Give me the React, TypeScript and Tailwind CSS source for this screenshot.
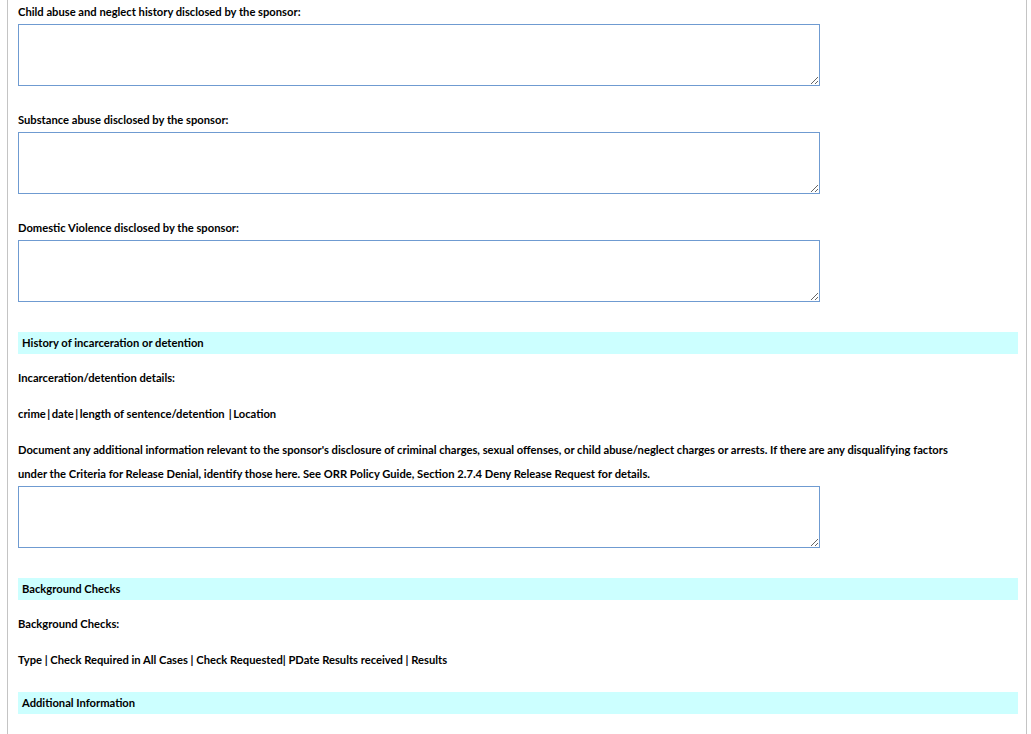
const fontStack = { fontFamily: 'Lato, "Open Sans", sans-serif' };

function Field({ label }: { label: string }) {
  return (
    <div className="mb-[22px]">
      <Line>{label}</Line>
      <textarea className="block w-[802px] h-[62px] border border-[#6f9bd1] bg-white outline-none" />
    </div>
  );
}

function SectionBar({ title }: { title: string }) {
  return <div className="w-[1000px] h-[22px] leading-[22px] bg-[#ccffff] pl-1 whitespace-nowrap">{title}</div>;
}

function Line({ children }: { children: React.ReactNode }) {
  return <div className="h-6 leading-6 whitespace-nowrap">{children}</div>;
}

// pipes in the original font carry more side bearing
function Pipe() {
  return <span className="px-[1.5px]">|</span>;
}

export default function App() {
  return (
    <div className="h-[734px] overflow-hidden bg-white">
      <div
        className="ml-[7px] w-[1020px] min-h-[734px] border-l border-r border-[#c4c4c4] pl-[10px] pr-2 text-[11.2px] font-bold text-black"
        style={fontStack}
      >
        <Field label="Child abuse and neglect history disclosed by the sponsor:" />
        <Field label="Substance abuse disclosed by the sponsor:" />
        <div>
          <Line>Domestic Violence disclosed by the sponsor:</Line>
          <textarea className="block w-[802px] h-[62px] border border-[#6f9bd1] bg-white outline-none" />
        </div>

        <div className="mt-[30px]">
          <SectionBar title="History of incarceration or detention" />
        </div>
        <div className="mt-3 flex flex-col gap-3">
          <Line>Incarceration/detention details:</Line>
          <Line>
            crime<Pipe />date<Pipe />length of sentence/detention <Pipe />Location
          </Line>
          <div>
            <Line>
              Document any additional information relevant to the sponsor's disclosure of criminal charges, sexual
              offenses, or child abuse/neglect charges or arrests. If there are any disqualifying factors
            </Line>
            <Line>
              under the Criteria for Release Denial, identify those here. See ORR Policy Guide, Section 2.7.4 Deny
              Release Request for details.
            </Line>
          </div>
        </div>
        <textarea className="block w-[802px] h-[62px] border border-[#6f9bd1] bg-white outline-none" />

        <div className="mt-[30px]">
          <SectionBar title="Background Checks" />
        </div>
        <div className="mt-3 flex flex-col gap-3">
          <Line>Background Checks:</Line>
          <Line>Type | Check Required in All Cases | Check Requested| PDate Results received | Results</Line>
        </div>

        <div className="mt-5">
          <SectionBar title="Additional Information" />
        </div>
      </div>
    </div>
  );
}
